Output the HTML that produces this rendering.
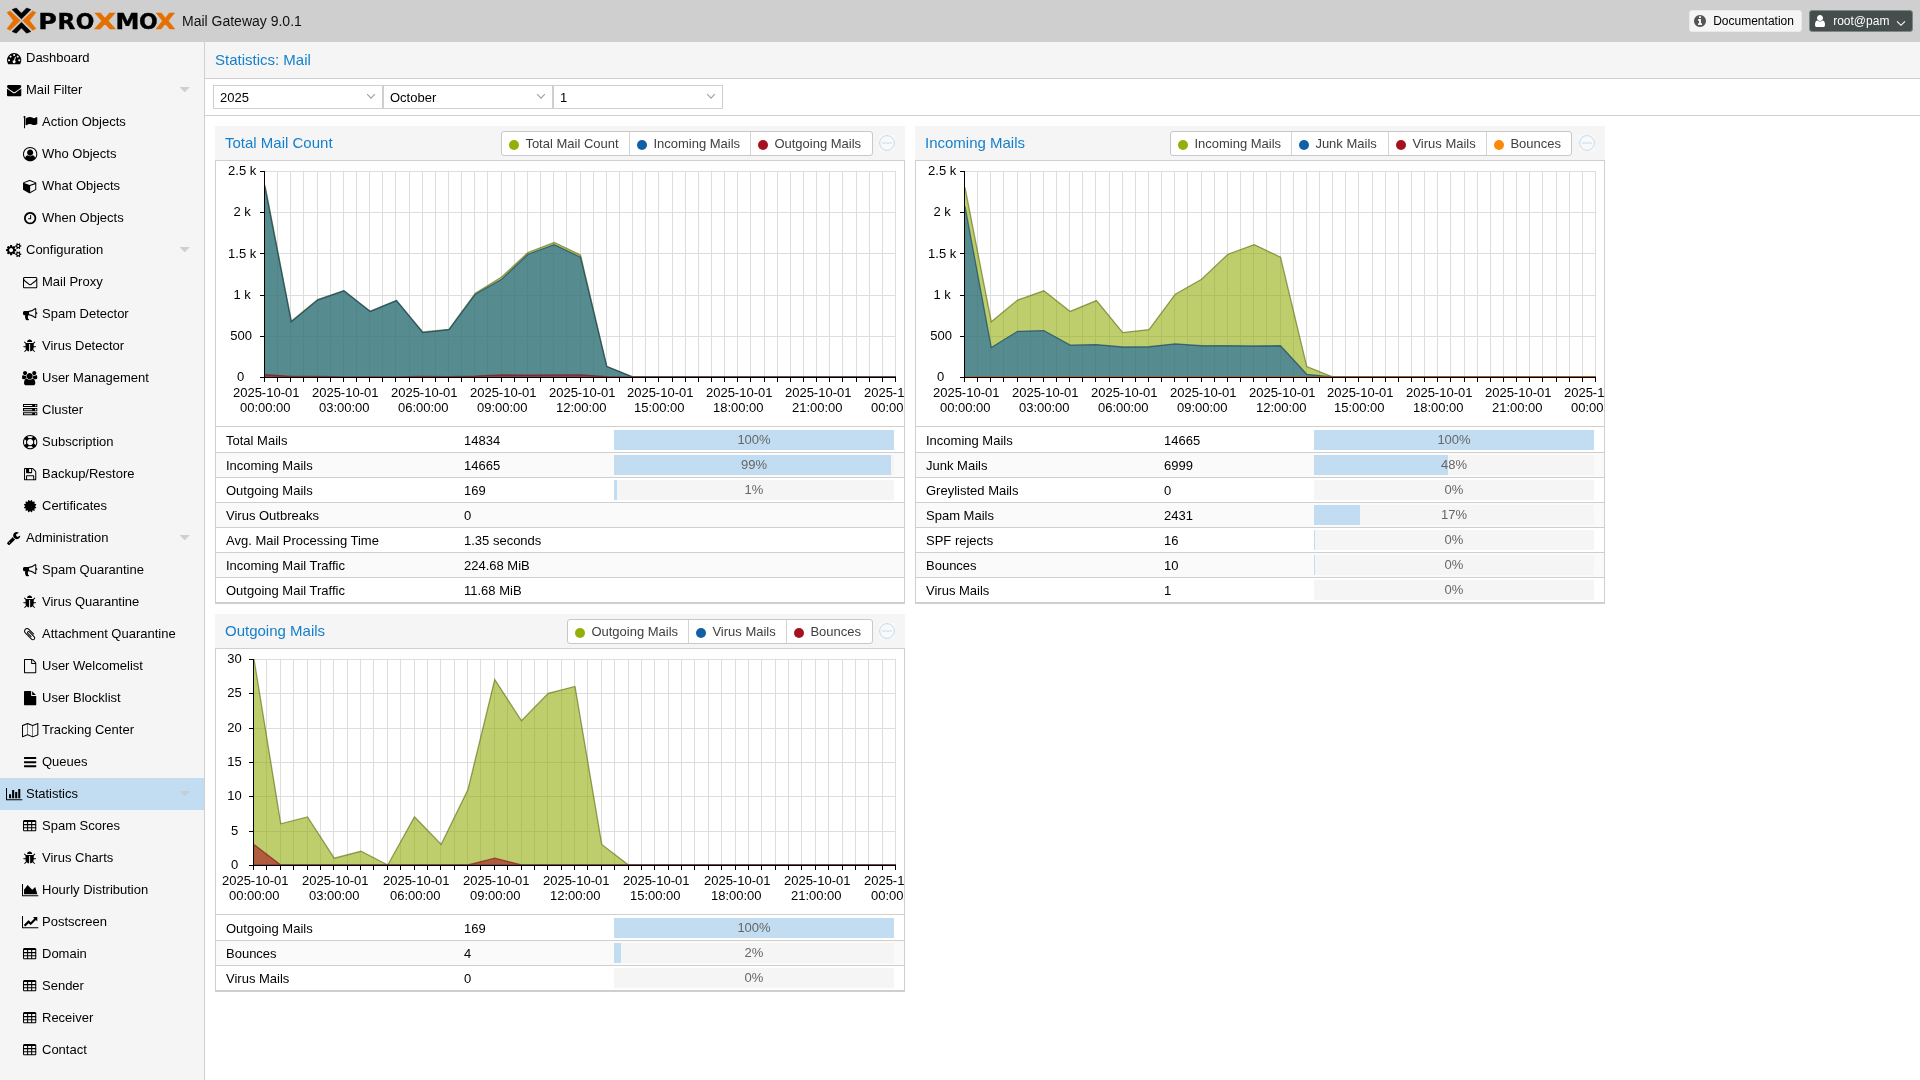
<!DOCTYPE html>
<html lang="en"><head><meta charset="utf-8"><title>Proxmox Mail Gateway - Statistics: Mail</title>
<style>
*{box-sizing:border-box}
html,body{margin:0;padding:0}
body{width:1920px;height:1080px;overflow:hidden;position:relative;background:#fff;font-family:"Liberation Sans",sans-serif;font-size:13px;color:#000}
.abs{position:absolute}
.ic{position:absolute;display:block;overflow:visible}
#hdr,#nav,#main{will-change:transform}
#hdr{position:absolute;left:0;top:0;width:1920px;height:42px;background:#cfcfcf}
#ver{position:absolute;left:182px;top:0;height:42px;line-height:42px;font-size:14px;color:#111;white-space:nowrap}
.hbtn{position:absolute;top:10px;height:22px;border-radius:3px;font-size:12px;line-height:20px;white-space:nowrap}
#nav{position:absolute;left:0;top:42px;width:204px;height:1038px;background:#f5f5f5}
#navb{position:absolute;left:204px;top:42px;width:1px;height:1038px;background:#cfcfcf}
.ni{position:absolute;left:0;width:204px;height:32px;line-height:32px;font-size:13px;color:#000;white-space:nowrap}
.ni.sel{background:#c2ddf2}
.ni span{position:absolute;top:0}
#main{position:absolute;left:205px;top:42px;width:1715px;height:1038px;background:#fff}
#title{position:absolute;left:0;top:0;width:1715px;height:37px;background:#f5f5f5;border-bottom:1px solid #cfcfcf;color:#157fcc;font-size:15px;line-height:36px;padding-left:10px}
#tb{position:absolute;left:0;top:37px;width:1715px;height:37px;background:#fff;border-bottom:1px solid #cfcfcf}
.cb{position:absolute;top:6px;width:170px;height:24px;border:1px solid #cfcfcf;background:#fff;font-size:13px;line-height:24px;padding-left:6px;white-space:nowrap}
.pn{position:absolute;width:690px}
.ph{position:absolute;left:0;top:0;width:690px;height:34px;background:#f5f5f5;color:#157fcc;font-size:15px;line-height:34px;padding-left:10px;white-space:nowrap}
.pb{position:absolute;left:0;top:34px;width:690px;border:1px solid #cfcfcf;background:#fff}
.lg{position:absolute;top:5px;height:25px;border:1px solid #c8c8c8;border-radius:3px;background:#fff;display:flex;font-size:13px;color:#404040;line-height:24px;white-space:nowrap}
.li{position:relative;padding:0 0 0 23.4px;border-right:1px solid #d4d4d4}
.li:last-child{border-right:0}
.li i{position:absolute;left:7px;top:7.8px;width:10.4px;height:10.4px;border-radius:50%}
.tool{position:absolute;left:664px;top:9px;width:16px;height:16px;background:#f9f9f9}
.tool svg{display:block}
.gr{position:absolute;left:0;width:688px;border-top:1px solid #cfcfcf}
.row{position:relative;width:688px;height:25px;border-top:1px solid #cfcfcf;background:#fff;font-size:13px;line-height:15px;white-space:nowrap}
.row:first-child{border-top-color:#fff}
.row:last-child{height:26px;border-bottom:1px solid #cfcfcf}
.row.alt{background:#fafafa}
.row .c1{position:absolute;left:10px;top:5px}
.row .c2{position:absolute;left:248px;top:5px}
.pg{position:absolute;left:398px;top:2px;width:280px;height:20px;background:#f5f5f5;overflow:hidden}
.pg b{position:absolute;left:0;top:0;height:20px;background:#c2ddf2;display:block}
.pg span{position:absolute;left:0;top:0;width:280px;text-align:center;line-height:20px;color:#666;font-size:13px;font-weight:normal}
svg text{font-family:"Liberation Sans",sans-serif;font-size:13px;fill:#000}
</style></head><body>

<div id="hdr">
<svg class="abs" style="left:0;top:0" width="180" height="42" viewBox="0 0 180 42">
<g stroke-width="0.5" stroke-linejoin="round">
<polygon fill="#000" stroke="#000" points="12.0,9.6 16.3,8.0 21.45,13.2 26.6,8.0 30.9,9.6 21.45,19.0"/>
<polygon fill="#000" stroke="#000" points="12.0,31.6 16.3,33.2 21.45,28.0 26.6,33.2 30.9,31.6 21.45,22.2"/>
<polygon fill="#e57000" stroke="#e57000" points="7.0,12.5 10.2,10.9 20.3,20.6 10.2,30.3 7.0,28.7 13.4,20.6"/>
<polygon fill="#e57000" stroke="#e57000" points="35.9,12.5 32.7,10.9 22.6,20.6 32.7,30.3 35.9,28.7 29.5,20.6"/>
</g>
<text y="28.6" style="font-family:'DejaVu Sans','Liberation Sans',sans-serif;font-weight:bold;font-size:20.9px;stroke-width:0.4"><tspan x="38.3" textLength="18.6" lengthAdjust="spacingAndGlyphs" fill="#000" stroke="#000">P</tspan><tspan x="57.5" textLength="17.8" lengthAdjust="spacingAndGlyphs" fill="#000" stroke="#000">R</tspan><tspan x="75.8" textLength="18.6" lengthAdjust="spacingAndGlyphs" fill="#000" stroke="#000">O</tspan><tspan x="94.1" textLength="22.0" lengthAdjust="spacingAndGlyphs" fill="#e57000" stroke="#e57000">X</tspan><tspan x="115.5" textLength="23.9" lengthAdjust="spacingAndGlyphs" fill="#000" stroke="#000">M</tspan><tspan x="139.1" textLength="18.7" lengthAdjust="spacingAndGlyphs" fill="#000" stroke="#000">O</tspan><tspan x="155.5" textLength="19.8" lengthAdjust="spacingAndGlyphs" fill="#e57000" stroke="#e57000">X</tspan></text>
</svg>
<div id="ver">Mail Gateway 9.0.1</div>
<div class="hbtn" style="left:1689px;width:113px;background:#f5f5f5;border:1px solid #eaeaea;color:#000">
<svg class="ic" style="left:4.20px;top:3.00px;width:12.00px;height:14.00px" viewBox="0 -1536 1536 1792"><path fill="#555" transform="scale(1,-1)" d="M1024 160v160q0 14 -9 23t-23 9h-96v512q0 14 -9 23t-23 9h-320q-14 0 -23 -9t-9 -23v-160q0 -14 9 -23t23 -9h96v-320h-96q-14 0 -23 -9t-9 -23v-160q0 -14 9 -23t23 -9h448q14 0 23 9t9 23zM896 1056v160q0 14 -9 23t-23 9h-192q-14 0 -23 -9t-9 -23v-160q0 -14 9 -23
t23 -9h192q14 0 23 9t9 23zM1536 640q0 -209 -103 -385.5t-279.5 -279.5t-385.5 -103t-385.5 103t-279.5 279.5t-103 385.5t103 385.5t279.5 279.5t385.5 103t385.5 -103t279.5 -279.5t103 -385.5z"/></svg>
<span class="abs" style="left:23.2px;top:-0.5px">Documentation</span></div>
<div class="hbtn" style="left:1809px;width:104px;background:#464d4d;border:1px solid #7d8787;color:#fff">
<svg class="ic" style="left:4.60px;top:3.00px;width:10.00px;height:14.00px" viewBox="0 -1536 1280 1792"><path fill="#fff" transform="scale(1,-1)" d="M1280 137q0 -109 -62.5 -187t-150.5 -78h-854q-88 0 -150.5 78t-62.5 187q0 85 8.5 160.5t31.5 152t58.5 131t94 89t134.5 34.5q131 -128 313 -128t313 128q76 0 134.5 -34.5t94 -89t58.5 -131t31.5 -152t8.5 -160.5zM1024 1024q0 -159 -112.5 -271.5t-271.5 -112.5
t-271.5 112.5t-112.5 271.5t112.5 271.5t271.5 112.5t271.5 -112.5t112.5 -271.5z"/></svg>
<span class="abs" style="left:23.2px;top:-0.5px">root@pam</span>
<svg class="abs" style="left:85.2px;top:8.5px" width="12" height="8" viewBox="0 0 12 8"><polyline points="2,1.3 6,5.3 10,1.3" fill="none" stroke="#fff" stroke-width="1.1"/></svg>
</div>
</div>
<div id="nav">
<div class="ni" style="top:0px">
<svg class="ic" style="left:6.85px;top:8.84px;width:14.30px;height:14.30px" viewBox="0 -1536 1792 1792"><path fill="#000" transform="scale(1,-1)" d="M384 384q0 53 -37.5 90.5t-90.5 37.5t-90.5 -37.5t-37.5 -90.5t37.5 -90.5t90.5 -37.5t90.5 37.5t37.5 90.5zM576 832q0 53 -37.5 90.5t-90.5 37.5t-90.5 -37.5t-37.5 -90.5t37.5 -90.5t90.5 -37.5t90.5 37.5t37.5 90.5zM1004 351l101 382q6 26 -7.5 48.5t-38.5 29.5
t-48 -6.5t-30 -39.5l-101 -382q-60 -5 -107 -43.5t-63 -98.5q-20 -77 20 -146t117 -89t146 20t89 117q16 60 -6 117t-72 91zM1664 384q0 53 -37.5 90.5t-90.5 37.5t-90.5 -37.5t-37.5 -90.5t37.5 -90.5t90.5 -37.5t90.5 37.5t37.5 90.5zM1024 1024q0 53 -37.5 90.5
t-90.5 37.5t-90.5 -37.5t-37.5 -90.5t37.5 -90.5t90.5 -37.5t90.5 37.5t37.5 90.5zM1472 832q0 53 -37.5 90.5t-90.5 37.5t-90.5 -37.5t-37.5 -90.5t37.5 -90.5t90.5 -37.5t90.5 37.5t37.5 90.5zM1792 384q0 -261 -141 -483q-19 -29 -54 -29h-1402q-35 0 -54 29
q-141 221 -141 483q0 182 71 348t191 286t286 191t348 71t348 -71t286 -191t191 -286t71 -348z"/></svg>
<span style="left:26px">Dashboard</span>
</div>
<div class="ni" style="top:32px">
<svg class="ic" style="left:6.85px;top:8.84px;width:14.30px;height:14.30px" viewBox="0 -1536 1792 1792"><path fill="#000" transform="scale(1,-1)" d="M1792 826v-794q0 -66 -47 -113t-113 -47h-1472q-66 0 -113 47t-47 113v794q44 -49 101 -87q362 -246 497 -345q57 -42 92.5 -65.5t94.5 -48t110 -24.5h1h1q51 0 110 24.5t94.5 48t92.5 65.5q170 123 498 345q57 39 100 87zM1792 1120q0 -79 -49 -151t-122 -123
q-376 -261 -468 -325q-10 -7 -42.5 -30.5t-54 -38t-52 -32.5t-57.5 -27t-50 -9h-1h-1q-23 0 -50 9t-57.5 27t-52 32.5t-54 38t-42.5 30.5q-91 64 -262 182.5t-205 142.5q-62 42 -117 115.5t-55 136.5q0 78 41.5 130t118.5 52h1472q65 0 112.5 -47t47.5 -113z"/></svg>
<span style="left:26px">Mail Filter</span>
<svg class="abs" style="left:178px;top:10px" width="14" height="12" viewBox="0 0 14 12"><path d="M2.2,3 L11.2,3 Q11.9,3 11.4,3.6 L7.1,7.9 Q6.7,8.3 6.3,7.9 L2,3.6 Q1.5,3 2.2,3Z" fill="#cfcfcf"/></svg>
</div>
<div class="ni" style="top:64px">
<svg class="ic" style="left:22.85px;top:8.84px;width:14.30px;height:14.30px" viewBox="0 -1536 1792 1792"><path fill="#000" transform="scale(1,-1)" d="M320 1280q0 -72 -64 -110v-1266q0 -13 -9.5 -22.5t-22.5 -9.5h-64q-13 0 -22.5 9.5t-9.5 22.5v1266q-64 38 -64 110q0 53 37.5 90.5t90.5 37.5t90.5 -37.5t37.5 -90.5zM1792 1216v-763q0 -25 -12.5 -38.5t-39.5 -27.5q-215 -116 -369 -116q-61 0 -123.5 22t-108.5 48
t-115.5 48t-142.5 22q-192 0 -464 -146q-17 -9 -33 -9q-26 0 -45 19t-19 45v742q0 32 31 55q21 14 79 43q236 120 421 120q107 0 200 -29t219 -88q38 -19 88 -19q54 0 117.5 21t110 47t88 47t54.5 21q26 0 45 -19t19 -45z"/></svg>
<span style="left:42px">Action Objects</span>
</div>
<div class="ni" style="top:96px">
<svg class="ic" style="left:22.85px;top:8.84px;width:14.30px;height:14.30px" viewBox="0 -1536 1792 1792"><path fill="#000" transform="scale(1,-1)" d="M896 1536q182 0 348 -71t286 -191t191 -286t71 -348q0 -181 -70.5 -347t-190.5 -286t-286 -191.5t-349 -71.5t-349 71t-285.5 191.5t-190.5 286t-71 347.5t71 348t191 286t286 191t348 71zM1515 185q149 205 149 455q0 156 -61 298t-164 245t-245 164t-298 61t-298 -61
t-245 -164t-164 -245t-61 -298q0 -250 149 -455q66 327 306 327q131 -128 313 -128t313 128q240 0 306 -327zM1280 832q0 159 -112.5 271.5t-271.5 112.5t-271.5 -112.5t-112.5 -271.5t112.5 -271.5t271.5 -112.5t271.5 112.5t112.5 271.5z"/></svg>
<span style="left:42px">Who Objects</span>
</div>
<div class="ni" style="top:128px">
<svg class="ic" style="left:22.85px;top:8.84px;width:14.30px;height:14.30px" viewBox="0 -1536 1792 1792"><path fill="#000" transform="scale(1,-1)" d="M896 -93l640 349v636l-640 -233v-752zM832 772l698 254l-698 254l-698 -254zM1664 1024v-768q0 -35 -18 -65t-49 -47l-704 -384q-28 -16 -61 -16t-61 16l-704 384q-31 17 -49 47t-18 65v768q0 40 23 73t61 47l704 256q22 8 44 8t44 -8l704 -256q38 -14 61 -47t23 -73z
"/></svg>
<span style="left:42px">What Objects</span>
</div>
<div class="ni" style="top:160px">
<svg class="ic" style="left:23.87px;top:8.84px;width:12.26px;height:14.30px" viewBox="0 -1536 1536 1792"><path fill="#000" transform="scale(1,-1)" d="M896 992v-448q0 -14 -9 -23t-23 -9h-320q-14 0 -23 9t-9 23v64q0 14 9 23t23 9h224v352q0 14 9 23t23 9h64q14 0 23 -9t9 -23zM1312 640q0 148 -73 273t-198 198t-273 73t-273 -73t-198 -198t-73 -273t73 -273t198 -198t273 -73t273 73t198 198t73 273zM1536 640
q0 -209 -103 -385.5t-279.5 -279.5t-385.5 -103t-385.5 103t-279.5 279.5t-103 385.5t103 385.5t279.5 279.5t385.5 103t385.5 -103t279.5 -279.5t103 -385.5z"/></svg>
<span style="left:42px">When Objects</span>
</div>
<div class="ni" style="top:192px">
<svg class="ic" style="left:6.34px;top:8.84px;width:15.32px;height:14.30px" viewBox="0 -1536 1920 1792"><path fill="#000" transform="scale(1,-1)" d="M896 640q0 106 -75 181t-181 75t-181 -75t-75 -181t75 -181t181 -75t181 75t75 181zM1664 128q0 52 -38 90t-90 38t-90 -38t-38 -90q0 -53 37.5 -90.5t90.5 -37.5t90.5 37.5t37.5 90.5zM1664 1152q0 52 -38 90t-90 38t-90 -38t-38 -90q0 -53 37.5 -90.5t90.5 -37.5
t90.5 37.5t37.5 90.5zM1280 731v-185q0 -10 -7 -19.5t-16 -10.5l-155 -24q-11 -35 -32 -76q34 -48 90 -115q7 -11 7 -20q0 -12 -7 -19q-23 -30 -82.5 -89.5t-78.5 -59.5q-11 0 -21 7l-115 90q-37 -19 -77 -31q-11 -108 -23 -155q-7 -24 -30 -24h-186q-11 0 -20 7.5t-10 17.5
l-23 153q-34 10 -75 31l-118 -89q-7 -7 -20 -7q-11 0 -21 8q-144 133 -144 160q0 9 7 19q10 14 41 53t47 61q-23 44 -35 82l-152 24q-10 1 -17 9.5t-7 19.5v185q0 10 7 19.5t16 10.5l155 24q11 35 32 76q-34 48 -90 115q-7 11 -7 20q0 12 7 20q22 30 82 89t79 59q11 0 21 -7
l115 -90q34 18 77 32q11 108 23 154q7 24 30 24h186q11 0 20 -7.5t10 -17.5l23 -153q34 -10 75 -31l118 89q8 7 20 7q11 0 21 -8q144 -133 144 -160q0 -8 -7 -19q-12 -16 -42 -54t-45 -60q23 -48 34 -82l152 -23q10 -2 17 -10.5t7 -19.5zM1920 198v-140q0 -16 -149 -31
q-12 -27 -30 -52q51 -113 51 -138q0 -4 -4 -7q-122 -71 -124 -71q-8 0 -46 47t-52 68q-20 -2 -30 -2t-30 2q-14 -21 -52 -68t-46 -47q-2 0 -124 71q-4 3 -4 7q0 25 51 138q-18 25 -30 52q-149 15 -149 31v140q0 16 149 31q13 29 30 52q-51 113 -51 138q0 4 4 7q4 2 35 20
t59 34t30 16q8 0 46 -46.5t52 -67.5q20 2 30 2t30 -2q51 71 92 112l6 2q4 0 124 -70q4 -3 4 -7q0 -25 -51 -138q17 -23 30 -52q149 -15 149 -31zM1920 1222v-140q0 -16 -149 -31q-12 -27 -30 -52q51 -113 51 -138q0 -4 -4 -7q-122 -71 -124 -71q-8 0 -46 47t-52 68
q-20 -2 -30 -2t-30 2q-14 -21 -52 -68t-46 -47q-2 0 -124 71q-4 3 -4 7q0 25 51 138q-18 25 -30 52q-149 15 -149 31v140q0 16 149 31q13 29 30 52q-51 113 -51 138q0 4 4 7q4 2 35 20t59 34t30 16q8 0 46 -46.5t52 -67.5q20 2 30 2t30 -2q51 71 92 112l6 2q4 0 124 -70
q4 -3 4 -7q0 -25 -51 -138q17 -23 30 -52q149 -15 149 -31z"/></svg>
<span style="left:26px">Configuration</span>
<svg class="abs" style="left:178px;top:10px" width="14" height="12" viewBox="0 0 14 12"><path d="M2.2,3 L11.2,3 Q11.9,3 11.4,3.6 L7.1,7.9 Q6.7,8.3 6.3,7.9 L2,3.6 Q1.5,3 2.2,3Z" fill="#cfcfcf"/></svg>
</div>
<div class="ni" style="top:224px">
<svg class="ic" style="left:22.85px;top:8.84px;width:14.30px;height:14.30px" viewBox="0 -1536 1792 1792"><path fill="#000" transform="scale(1,-1)" d="M1664 32v768q-32 -36 -69 -66q-268 -206 -426 -338q-51 -43 -83 -67t-86.5 -48.5t-102.5 -24.5h-1h-1q-48 0 -102.5 24.5t-86.5 48.5t-83 67q-158 132 -426 338q-37 30 -69 66v-768q0 -13 9.5 -22.5t22.5 -9.5h1472q13 0 22.5 9.5t9.5 22.5zM1664 1083v11v13.5t-0.5 13
t-3 12.5t-5.5 9t-9 7.5t-14 2.5h-1472q-13 0 -22.5 -9.5t-9.5 -22.5q0 -168 147 -284q193 -152 401 -317q6 -5 35 -29.5t46 -37.5t44.5 -31.5t50.5 -27.5t43 -9h1h1q20 0 43 9t50.5 27.5t44.5 31.5t46 37.5t35 29.5q208 165 401 317q54 43 100.5 115.5t46.5 131.5z
M1792 1120v-1088q0 -66 -47 -113t-113 -47h-1472q-66 0 -113 47t-47 113v1088q0 66 47 113t113 47h1472q66 0 113 -47t47 -113z"/></svg>
<span style="left:42px">Mail Proxy</span>
</div>
<div class="ni" style="top:256px">
<svg class="ic" style="left:22.85px;top:8.84px;width:14.30px;height:14.30px" viewBox="0 -1536 1792 1792"><path fill="#000" transform="scale(1,-1)" d="M1664 896q53 0 90.5 -37.5t37.5 -90.5t-37.5 -90.5t-90.5 -37.5v-384q0 -52 -38 -90t-90 -38q-417 347 -812 380q-58 -19 -91 -66t-31 -100.5t40 -92.5q-20 -33 -23 -65.5t6 -58t33.5 -55t48 -50t61.5 -50.5q-29 -58 -111.5 -83t-168.5 -11.5t-132 55.5q-7 23 -29.5 87.5
t-32 94.5t-23 89t-15 101t3.5 98.5t22 110.5h-122q-66 0 -113 47t-47 113v192q0 66 47 113t113 47h480q435 0 896 384q52 0 90 -38t38 -90v-384zM1536 292v954q-394 -302 -768 -343v-270q377 -42 768 -341z"/></svg>
<span style="left:42px">Spam Detector</span>
</div>
<div class="ni" style="top:288px">
<svg class="ic" style="left:23.36px;top:8.84px;width:13.28px;height:14.30px" viewBox="0 -1536 1664 1792"><path fill="#000" transform="scale(1,-1)" d="M1632 576q0 -26 -19 -45t-45 -19h-224q0 -171 -67 -290l208 -209q19 -19 19 -45t-19 -45q-18 -19 -45 -19t-45 19l-198 197q-5 -5 -15 -13t-42 -28.5t-65 -36.5t-82 -29t-97 -13v896h-128v-896q-51 0 -101.5 13.5t-87 33t-66 39t-43.5 32.5l-15 14l-183 -207
q-20 -21 -48 -21q-24 0 -43 16q-19 18 -20.5 44.5t15.5 46.5l202 227q-58 114 -58 274h-224q-26 0 -45 19t-19 45t19 45t45 19h224v294l-173 173q-19 19 -19 45t19 45t45 19t45 -19l173 -173h844l173 173q19 19 45 19t45 -19t19 -45t-19 -45l-173 -173v-294h224q26 0 45 -19
t19 -45zM1152 1152h-640q0 133 93.5 226.5t226.5 93.5t226.5 -93.5t93.5 -226.5z"/></svg>
<span style="left:42px">Virus Detector</span>
</div>
<div class="ni" style="top:320px">
<svg class="ic" style="left:22.34px;top:8.84px;width:15.32px;height:14.30px" viewBox="0 -1536 1920 1792"><path fill="#000" transform="scale(1,-1)" d="M593 640q-162 -5 -265 -128h-134q-82 0 -138 40.5t-56 118.5q0 353 124 353q6 0 43.5 -21t97.5 -42.5t119 -21.5q67 0 133 23q-5 -37 -5 -66q0 -139 81 -256zM1664 3q0 -120 -73 -189.5t-194 -69.5h-874q-121 0 -194 69.5t-73 189.5q0 53 3.5 103.5t14 109t26.5 108.5
t43 97.5t62 81t85.5 53.5t111.5 20q10 0 43 -21.5t73 -48t107 -48t135 -21.5t135 21.5t107 48t73 48t43 21.5q61 0 111.5 -20t85.5 -53.5t62 -81t43 -97.5t26.5 -108.5t14 -109t3.5 -103.5zM640 1280q0 -106 -75 -181t-181 -75t-181 75t-75 181t75 181t181 75t181 -75
t75 -181zM1344 896q0 -159 -112.5 -271.5t-271.5 -112.5t-271.5 112.5t-112.5 271.5t112.5 271.5t271.5 112.5t271.5 -112.5t112.5 -271.5zM1920 671q0 -78 -56 -118.5t-138 -40.5h-134q-103 123 -265 128q81 117 81 256q0 29 -5 66q66 -23 133 -23q59 0 119 21.5t97.5 42.5
t43.5 21q124 0 124 -353zM1792 1280q0 -106 -75 -181t-181 -75t-181 75t-75 181t75 181t181 75t181 -75t75 -181z"/></svg>
<span style="left:42px">User Management</span>
</div>
<div class="ni" style="top:352px">
<svg class="ic" style="left:22.85px;top:8.84px;width:14.30px;height:14.30px" viewBox="0 -1536 1792 1792"><path fill="#000" transform="scale(1,-1)" d="M128 128h1024v128h-1024v-128zM128 640h1024v128h-1024v-128zM1696 192q0 40 -28 68t-68 28t-68 -28t-28 -68t28 -68t68 -28t68 28t28 68zM128 1152h1024v128h-1024v-128zM1696 704q0 40 -28 68t-68 28t-68 -28t-28 -68t28 -68t68 -28t68 28t28 68zM1696 1216
q0 40 -28 68t-68 28t-68 -28t-28 -68t28 -68t68 -28t68 28t28 68zM1792 384v-384h-1792v384h1792zM1792 896v-384h-1792v384h1792zM1792 1408v-384h-1792v384h1792z"/></svg>
<span style="left:42px">Cluster</span>
</div>
<div class="ni" style="top:384px">
<svg class="ic" style="left:22.85px;top:8.84px;width:14.30px;height:14.30px" viewBox="0 -1536 1792 1792"><path fill="#000" transform="scale(1,-1)" d="M896 1536q182 0 348 -71t286 -191t191 -286t71 -348t-71 -348t-191 -286t-286 -191t-348 -71t-348 71t-286 191t-191 286t-71 348t71 348t191 286t286 191t348 71zM896 1408q-190 0 -361 -90l194 -194q82 28 167 28t167 -28l194 194q-171 90 -361 90zM218 279l194 194
q-28 82 -28 167t28 167l-194 194q-90 -171 -90 -361t90 -361zM896 -128q190 0 361 90l-194 194q-82 -28 -167 -28t-167 28l-194 -194q171 -90 361 -90zM896 256q159 0 271.5 112.5t112.5 271.5t-112.5 271.5t-271.5 112.5t-271.5 -112.5t-112.5 -271.5t112.5 -271.5
t271.5 -112.5zM1380 473l194 -194q90 171 90 361t-90 361l-194 -194q28 -82 28 -167t-28 -167z"/></svg>
<span style="left:42px">Subscription</span>
</div>
<div class="ni" style="top:416px">
<svg class="ic" style="left:23.87px;top:8.84px;width:12.26px;height:14.30px" viewBox="0 -1536 1536 1792"><path fill="#000" transform="scale(1,-1)" d="M384 0h768v384h-768v-384zM1280 0h128v896q0 14 -10 38.5t-20 34.5l-281 281q-10 10 -34 20t-39 10v-416q0 -40 -28 -68t-68 -28h-576q-40 0 -68 28t-28 68v416h-128v-1280h128v416q0 40 28 68t68 28h832q40 0 68 -28t28 -68v-416zM896 928v320q0 13 -9.5 22.5t-22.5 9.5
h-192q-13 0 -22.5 -9.5t-9.5 -22.5v-320q0 -13 9.5 -22.5t22.5 -9.5h192q13 0 22.5 9.5t9.5 22.5zM1536 896v-928q0 -40 -28 -68t-68 -28h-1344q-40 0 -68 28t-28 68v1344q0 40 28 68t68 28h928q40 0 88 -20t76 -48l280 -280q28 -28 48 -76t20 -88z"/></svg>
<span style="left:42px">Backup/Restore</span>
</div>
<div class="ni" style="top:448px">
<svg class="ic" style="left:23.87px;top:8.84px;width:12.26px;height:14.30px" viewBox="0 -1536 1536 1792"><path fill="#000" transform="scale(1,-1)" d="M1376 640l138 -135q30 -28 20 -70q-12 -41 -52 -51l-188 -48l53 -186q12 -41 -19 -70q-29 -31 -70 -19l-186 53l-48 -188q-10 -40 -51 -52q-12 -2 -19 -2q-31 0 -51 22l-135 138l-135 -138q-28 -30 -70 -20q-41 11 -51 52l-48 188l-186 -53q-41 -12 -70 19q-31 29 -19 70
l53 186l-188 48q-40 10 -52 51q-10 42 20 70l138 135l-138 135q-30 28 -20 70q12 41 52 51l188 48l-53 186q-12 41 19 70q29 31 70 19l186 -53l48 188q10 41 51 51q41 12 70 -19l135 -139l135 139q29 30 70 19q41 -10 51 -51l48 -188l186 53q41 12 70 -19q31 -29 19 -70
l-53 -186l188 -48q40 -10 52 -51q10 -42 -20 -70z"/></svg>
<span style="left:42px">Certificates</span>
</div>
<div class="ni" style="top:480px">
<svg class="ic" style="left:7.36px;top:8.84px;width:13.28px;height:14.30px" viewBox="0 -1536 1664 1792"><path fill="#000" transform="scale(1,-1)" d="M384 64q0 26 -19 45t-45 19t-45 -19t-19 -45t19 -45t45 -19t45 19t19 45zM1028 484l-682 -682q-37 -37 -90 -37q-52 0 -91 37l-106 108q-38 36 -38 90q0 53 38 91l681 681q39 -98 114.5 -173.5t173.5 -114.5zM1662 919q0 -39 -23 -106q-47 -134 -164.5 -217.5
t-258.5 -83.5q-185 0 -316.5 131.5t-131.5 316.5t131.5 316.5t316.5 131.5q58 0 121.5 -16.5t107.5 -46.5q16 -11 16 -28t-16 -28l-293 -169v-224l193 -107q5 3 79 48.5t135.5 81t70.5 35.5q15 0 23.5 -10t8.5 -25z"/></svg>
<span style="left:26px">Administration</span>
<svg class="abs" style="left:178px;top:10px" width="14" height="12" viewBox="0 0 14 12"><path d="M2.2,3 L11.2,3 Q11.9,3 11.4,3.6 L7.1,7.9 Q6.7,8.3 6.3,7.9 L2,3.6 Q1.5,3 2.2,3Z" fill="#cfcfcf"/></svg>
</div>
<div class="ni" style="top:512px">
<svg class="ic" style="left:22.85px;top:8.84px;width:14.30px;height:14.30px" viewBox="0 -1536 1792 1792"><path fill="#000" transform="scale(1,-1)" d="M1664 896q53 0 90.5 -37.5t37.5 -90.5t-37.5 -90.5t-90.5 -37.5v-384q0 -52 -38 -90t-90 -38q-417 347 -812 380q-58 -19 -91 -66t-31 -100.5t40 -92.5q-20 -33 -23 -65.5t6 -58t33.5 -55t48 -50t61.5 -50.5q-29 -58 -111.5 -83t-168.5 -11.5t-132 55.5q-7 23 -29.5 87.5
t-32 94.5t-23 89t-15 101t3.5 98.5t22 110.5h-122q-66 0 -113 47t-47 113v192q0 66 47 113t113 47h480q435 0 896 384q52 0 90 -38t38 -90v-384zM1536 292v954q-394 -302 -768 -343v-270q377 -42 768 -341z"/></svg>
<span style="left:42px">Spam Quarantine</span>
</div>
<div class="ni" style="top:544px">
<svg class="ic" style="left:23.36px;top:8.84px;width:13.28px;height:14.30px" viewBox="0 -1536 1664 1792"><path fill="#000" transform="scale(1,-1)" d="M1632 576q0 -26 -19 -45t-45 -19h-224q0 -171 -67 -290l208 -209q19 -19 19 -45t-19 -45q-18 -19 -45 -19t-45 19l-198 197q-5 -5 -15 -13t-42 -28.5t-65 -36.5t-82 -29t-97 -13v896h-128v-896q-51 0 -101.5 13.5t-87 33t-66 39t-43.5 32.5l-15 14l-183 -207
q-20 -21 -48 -21q-24 0 -43 16q-19 18 -20.5 44.5t15.5 46.5l202 227q-58 114 -58 274h-224q-26 0 -45 19t-19 45t19 45t45 19h224v294l-173 173q-19 19 -19 45t19 45t45 19t45 -19l173 -173h844l173 173q19 19 45 19t45 -19t19 -45t-19 -45l-173 -173v-294h224q26 0 45 -19
t19 -45zM1152 1152h-640q0 133 93.5 226.5t226.5 93.5t226.5 -93.5t93.5 -226.5z"/></svg>
<span style="left:42px">Virus Quarantine</span>
</div>
<div class="ni" style="top:576px">
<svg class="ic" style="left:24.38px;top:8.84px;width:11.24px;height:14.30px" viewBox="0 -1536 1408 1792"><path fill="#000" transform="scale(1,-1)" d="M1404 151q0 -117 -79 -196t-196 -79q-135 0 -235 100l-777 776q-113 115 -113 271q0 159 110 270t269 111q158 0 273 -113l605 -606q10 -10 10 -22q0 -16 -30.5 -46.5t-46.5 -30.5q-13 0 -23 10l-606 607q-79 77 -181 77q-106 0 -179 -75t-73 -181q0 -105 76 -181
l776 -777q63 -63 145 -63q64 0 106 42t42 106q0 82 -63 145l-581 581q-26 24 -60 24q-29 0 -48 -19t-19 -48q0 -32 25 -59l410 -410q10 -10 10 -22q0 -16 -31 -47t-47 -31q-12 0 -22 10l-410 410q-63 61 -63 149q0 82 57 139t139 57q88 0 149 -63l581 -581q100 -98 100 -235
z"/></svg>
<span style="left:42px">Attachment Quarantine</span>
</div>
<div class="ni" style="top:608px">
<svg class="ic" style="left:23.87px;top:8.84px;width:12.26px;height:14.30px" viewBox="0 -1536 1536 1792"><path fill="#000" transform="scale(1,-1)" d="M1468 1156q28 -28 48 -76t20 -88v-1152q0 -40 -28 -68t-68 -28h-1344q-40 0 -68 28t-28 68v1600q0 40 28 68t68 28h896q40 0 88 -20t76 -48zM1024 1400v-376h376q-10 29 -22 41l-313 313q-12 12 -41 22zM1408 -128v1024h-416q-40 0 -68 28t-28 68v416h-768v-1536h1280z
"/></svg>
<span style="left:42px">User Welcomelist</span>
</div>
<div class="ni" style="top:640px">
<svg class="ic" style="left:23.87px;top:8.84px;width:12.26px;height:14.30px" viewBox="0 -1536 1536 1792"><path fill="#000" transform="scale(1,-1)" d="M1024 1024v472q22 -14 36 -28l408 -408q14 -14 28 -36h-472zM896 992q0 -40 28 -68t68 -28h544v-1056q0 -40 -28 -68t-68 -28h-1344q-40 0 -68 28t-28 68v1600q0 40 28 68t68 28h800v-544z"/></svg>
<span style="left:42px">User Blocklist</span>
</div>
<div class="ni" style="top:672px">
<svg class="ic" style="left:21.83px;top:8.84px;width:16.34px;height:14.30px" viewBox="0 -1536 2048 1792"><path fill="#000" transform="scale(1,-1)" d="M2020 1525q28 -20 28 -53v-1408q0 -20 -11 -36t-29 -23l-640 -256q-24 -11 -48 0l-616 246l-616 -246q-10 -5 -24 -5q-19 0 -36 11q-28 20 -28 53v1408q0 20 11 36t29 23l640 256q24 11 48 0l616 -246l616 246q32 13 60 -6zM736 1390v-1270l576 -230v1270zM128 1173
v-1270l544 217v1270zM1920 107v1270l-544 -217v-1270z"/></svg>
<span style="left:42px">Tracking Center</span>
</div>
<div class="ni" style="top:704px">
<svg class="ic" style="left:23.87px;top:8.84px;width:12.26px;height:14.30px" viewBox="0 -1536 1536 1792"><path fill="#000" transform="scale(1,-1)" d="M1536 192v-128q0 -26 -19 -45t-45 -19h-1408q-26 0 -45 19t-19 45v128q0 26 19 45t45 19h1408q26 0 45 -19t19 -45zM1536 704v-128q0 -26 -19 -45t-45 -19h-1408q-26 0 -45 19t-19 45v128q0 26 19 45t45 19h1408q26 0 45 -19t19 -45zM1536 1216v-128q0 -26 -19 -45
t-45 -19h-1408q-26 0 -45 19t-19 45v128q0 26 19 45t45 19h1408q26 0 45 -19t19 -45z"/></svg>
<span style="left:42px">Queues</span>
</div>
<div class="ni sel" style="top:736px">
<svg class="ic" style="left:5.83px;top:8.84px;width:16.34px;height:14.30px" viewBox="0 -1536 2048 1792"><path fill="#000" transform="scale(1,-1)" d="M640 640v-512h-256v512h256zM1024 1152v-1024h-256v1024h256zM2048 0v-128h-2048v1536h128v-1408h1920zM1408 896v-768h-256v768h256zM1792 1280v-1152h-256v1152h256z"/></svg>
<span style="left:26px">Statistics</span>
<svg class="abs" style="left:178px;top:10px" width="14" height="12" viewBox="0 0 14 12"><path d="M2.2,3 L11.2,3 Q11.9,3 11.4,3.6 L7.1,7.9 Q6.7,8.3 6.3,7.9 L2,3.6 Q1.5,3 2.2,3Z" fill="#c6ced4"/></svg>
</div>
<div class="ni" style="top:768px">
<svg class="ic" style="left:23.36px;top:8.84px;width:13.28px;height:14.30px" viewBox="0 -1536 1664 1792"><path fill="#000" transform="scale(1,-1)" d="M512 160v192q0 14 -9 23t-23 9h-320q-14 0 -23 -9t-9 -23v-192q0 -14 9 -23t23 -9h320q14 0 23 9t9 23zM512 544v192q0 14 -9 23t-23 9h-320q-14 0 -23 -9t-9 -23v-192q0 -14 9 -23t23 -9h320q14 0 23 9t9 23zM1024 160v192q0 14 -9 23t-23 9h-320q-14 0 -23 -9t-9 -23
v-192q0 -14 9 -23t23 -9h320q14 0 23 9t9 23zM512 928v192q0 14 -9 23t-23 9h-320q-14 0 -23 -9t-9 -23v-192q0 -14 9 -23t23 -9h320q14 0 23 9t9 23zM1024 544v192q0 14 -9 23t-23 9h-320q-14 0 -23 -9t-9 -23v-192q0 -14 9 -23t23 -9h320q14 0 23 9t9 23zM1536 160v192
q0 14 -9 23t-23 9h-320q-14 0 -23 -9t-9 -23v-192q0 -14 9 -23t23 -9h320q14 0 23 9t9 23zM1024 928v192q0 14 -9 23t-23 9h-320q-14 0 -23 -9t-9 -23v-192q0 -14 9 -23t23 -9h320q14 0 23 9t9 23zM1536 544v192q0 14 -9 23t-23 9h-320q-14 0 -23 -9t-9 -23v-192
q0 -14 9 -23t23 -9h320q14 0 23 9t9 23zM1536 928v192q0 14 -9 23t-23 9h-320q-14 0 -23 -9t-9 -23v-192q0 -14 9 -23t23 -9h320q14 0 23 9t9 23zM1664 1248v-1088q0 -66 -47 -113t-113 -47h-1344q-66 0 -113 47t-47 113v1088q0 66 47 113t113 47h1344q66 0 113 -47t47 -113
z"/></svg>
<span style="left:42px">Spam Scores</span>
</div>
<div class="ni" style="top:800px">
<svg class="ic" style="left:23.36px;top:8.84px;width:13.28px;height:14.30px" viewBox="0 -1536 1664 1792"><path fill="#000" transform="scale(1,-1)" d="M1632 576q0 -26 -19 -45t-45 -19h-224q0 -171 -67 -290l208 -209q19 -19 19 -45t-19 -45q-18 -19 -45 -19t-45 19l-198 197q-5 -5 -15 -13t-42 -28.5t-65 -36.5t-82 -29t-97 -13v896h-128v-896q-51 0 -101.5 13.5t-87 33t-66 39t-43.5 32.5l-15 14l-183 -207
q-20 -21 -48 -21q-24 0 -43 16q-19 18 -20.5 44.5t15.5 46.5l202 227q-58 114 -58 274h-224q-26 0 -45 19t-19 45t19 45t45 19h224v294l-173 173q-19 19 -19 45t19 45t45 19t45 -19l173 -173h844l173 173q19 19 45 19t45 -19t19 -45t-19 -45l-173 -173v-294h224q26 0 45 -19
t19 -45zM1152 1152h-640q0 133 93.5 226.5t226.5 93.5t226.5 -93.5t93.5 -226.5z"/></svg>
<span style="left:42px">Virus Charts</span>
</div>
<div class="ni" style="top:832px">
<svg class="ic" style="left:21.83px;top:8.84px;width:16.34px;height:14.30px" viewBox="0 -1536 2048 1792"><path fill="#000" transform="scale(1,-1)" d="M2048 0v-128h-2048v1536h128v-1408h1920zM1664 1024l256 -896h-1664v576l448 576l576 -576z"/></svg>
<span style="left:42px">Hourly Distribution</span>
</div>
<div class="ni" style="top:864px">
<svg class="ic" style="left:21.83px;top:8.84px;width:16.34px;height:14.30px" viewBox="0 -1536 2048 1792"><path fill="#000" transform="scale(1,-1)" d="M2048 0v-128h-2048v1536h128v-1408h1920zM1920 1248v-435q0 -21 -19.5 -29.5t-35.5 7.5l-121 121l-633 -633q-10 -10 -23 -10t-23 10l-233 233l-416 -416l-192 192l585 585q10 10 23 10t23 -10l233 -233l464 464l-121 121q-16 16 -7.5 35.5t29.5 19.5h435q14 0 23 -9
t9 -23z"/></svg>
<span style="left:42px">Postscreen</span>
</div>
<div class="ni" style="top:896px">
<svg class="ic" style="left:23.36px;top:8.84px;width:13.28px;height:14.30px" viewBox="0 -1536 1664 1792"><path fill="#000" transform="scale(1,-1)" d="M512 160v192q0 14 -9 23t-23 9h-320q-14 0 -23 -9t-9 -23v-192q0 -14 9 -23t23 -9h320q14 0 23 9t9 23zM512 544v192q0 14 -9 23t-23 9h-320q-14 0 -23 -9t-9 -23v-192q0 -14 9 -23t23 -9h320q14 0 23 9t9 23zM1024 160v192q0 14 -9 23t-23 9h-320q-14 0 -23 -9t-9 -23
v-192q0 -14 9 -23t23 -9h320q14 0 23 9t9 23zM512 928v192q0 14 -9 23t-23 9h-320q-14 0 -23 -9t-9 -23v-192q0 -14 9 -23t23 -9h320q14 0 23 9t9 23zM1024 544v192q0 14 -9 23t-23 9h-320q-14 0 -23 -9t-9 -23v-192q0 -14 9 -23t23 -9h320q14 0 23 9t9 23zM1536 160v192
q0 14 -9 23t-23 9h-320q-14 0 -23 -9t-9 -23v-192q0 -14 9 -23t23 -9h320q14 0 23 9t9 23zM1024 928v192q0 14 -9 23t-23 9h-320q-14 0 -23 -9t-9 -23v-192q0 -14 9 -23t23 -9h320q14 0 23 9t9 23zM1536 544v192q0 14 -9 23t-23 9h-320q-14 0 -23 -9t-9 -23v-192
q0 -14 9 -23t23 -9h320q14 0 23 9t9 23zM1536 928v192q0 14 -9 23t-23 9h-320q-14 0 -23 -9t-9 -23v-192q0 -14 9 -23t23 -9h320q14 0 23 9t9 23zM1664 1248v-1088q0 -66 -47 -113t-113 -47h-1344q-66 0 -113 47t-47 113v1088q0 66 47 113t113 47h1344q66 0 113 -47t47 -113
z"/></svg>
<span style="left:42px">Domain</span>
</div>
<div class="ni" style="top:928px">
<svg class="ic" style="left:23.36px;top:8.84px;width:13.28px;height:14.30px" viewBox="0 -1536 1664 1792"><path fill="#000" transform="scale(1,-1)" d="M512 160v192q0 14 -9 23t-23 9h-320q-14 0 -23 -9t-9 -23v-192q0 -14 9 -23t23 -9h320q14 0 23 9t9 23zM512 544v192q0 14 -9 23t-23 9h-320q-14 0 -23 -9t-9 -23v-192q0 -14 9 -23t23 -9h320q14 0 23 9t9 23zM1024 160v192q0 14 -9 23t-23 9h-320q-14 0 -23 -9t-9 -23
v-192q0 -14 9 -23t23 -9h320q14 0 23 9t9 23zM512 928v192q0 14 -9 23t-23 9h-320q-14 0 -23 -9t-9 -23v-192q0 -14 9 -23t23 -9h320q14 0 23 9t9 23zM1024 544v192q0 14 -9 23t-23 9h-320q-14 0 -23 -9t-9 -23v-192q0 -14 9 -23t23 -9h320q14 0 23 9t9 23zM1536 160v192
q0 14 -9 23t-23 9h-320q-14 0 -23 -9t-9 -23v-192q0 -14 9 -23t23 -9h320q14 0 23 9t9 23zM1024 928v192q0 14 -9 23t-23 9h-320q-14 0 -23 -9t-9 -23v-192q0 -14 9 -23t23 -9h320q14 0 23 9t9 23zM1536 544v192q0 14 -9 23t-23 9h-320q-14 0 -23 -9t-9 -23v-192
q0 -14 9 -23t23 -9h320q14 0 23 9t9 23zM1536 928v192q0 14 -9 23t-23 9h-320q-14 0 -23 -9t-9 -23v-192q0 -14 9 -23t23 -9h320q14 0 23 9t9 23zM1664 1248v-1088q0 -66 -47 -113t-113 -47h-1344q-66 0 -113 47t-47 113v1088q0 66 47 113t113 47h1344q66 0 113 -47t47 -113
z"/></svg>
<span style="left:42px">Sender</span>
</div>
<div class="ni" style="top:960px">
<svg class="ic" style="left:23.36px;top:8.84px;width:13.28px;height:14.30px" viewBox="0 -1536 1664 1792"><path fill="#000" transform="scale(1,-1)" d="M512 160v192q0 14 -9 23t-23 9h-320q-14 0 -23 -9t-9 -23v-192q0 -14 9 -23t23 -9h320q14 0 23 9t9 23zM512 544v192q0 14 -9 23t-23 9h-320q-14 0 -23 -9t-9 -23v-192q0 -14 9 -23t23 -9h320q14 0 23 9t9 23zM1024 160v192q0 14 -9 23t-23 9h-320q-14 0 -23 -9t-9 -23
v-192q0 -14 9 -23t23 -9h320q14 0 23 9t9 23zM512 928v192q0 14 -9 23t-23 9h-320q-14 0 -23 -9t-9 -23v-192q0 -14 9 -23t23 -9h320q14 0 23 9t9 23zM1024 544v192q0 14 -9 23t-23 9h-320q-14 0 -23 -9t-9 -23v-192q0 -14 9 -23t23 -9h320q14 0 23 9t9 23zM1536 160v192
q0 14 -9 23t-23 9h-320q-14 0 -23 -9t-9 -23v-192q0 -14 9 -23t23 -9h320q14 0 23 9t9 23zM1024 928v192q0 14 -9 23t-23 9h-320q-14 0 -23 -9t-9 -23v-192q0 -14 9 -23t23 -9h320q14 0 23 9t9 23zM1536 544v192q0 14 -9 23t-23 9h-320q-14 0 -23 -9t-9 -23v-192
q0 -14 9 -23t23 -9h320q14 0 23 9t9 23zM1536 928v192q0 14 -9 23t-23 9h-320q-14 0 -23 -9t-9 -23v-192q0 -14 9 -23t23 -9h320q14 0 23 9t9 23zM1664 1248v-1088q0 -66 -47 -113t-113 -47h-1344q-66 0 -113 47t-47 113v1088q0 66 47 113t113 47h1344q66 0 113 -47t47 -113
z"/></svg>
<span style="left:42px">Receiver</span>
</div>
<div class="ni" style="top:992px">
<svg class="ic" style="left:23.36px;top:8.84px;width:13.28px;height:14.30px" viewBox="0 -1536 1664 1792"><path fill="#000" transform="scale(1,-1)" d="M512 160v192q0 14 -9 23t-23 9h-320q-14 0 -23 -9t-9 -23v-192q0 -14 9 -23t23 -9h320q14 0 23 9t9 23zM512 544v192q0 14 -9 23t-23 9h-320q-14 0 -23 -9t-9 -23v-192q0 -14 9 -23t23 -9h320q14 0 23 9t9 23zM1024 160v192q0 14 -9 23t-23 9h-320q-14 0 -23 -9t-9 -23
v-192q0 -14 9 -23t23 -9h320q14 0 23 9t9 23zM512 928v192q0 14 -9 23t-23 9h-320q-14 0 -23 -9t-9 -23v-192q0 -14 9 -23t23 -9h320q14 0 23 9t9 23zM1024 544v192q0 14 -9 23t-23 9h-320q-14 0 -23 -9t-9 -23v-192q0 -14 9 -23t23 -9h320q14 0 23 9t9 23zM1536 160v192
q0 14 -9 23t-23 9h-320q-14 0 -23 -9t-9 -23v-192q0 -14 9 -23t23 -9h320q14 0 23 9t9 23zM1024 928v192q0 14 -9 23t-23 9h-320q-14 0 -23 -9t-9 -23v-192q0 -14 9 -23t23 -9h320q14 0 23 9t9 23zM1536 544v192q0 14 -9 23t-23 9h-320q-14 0 -23 -9t-9 -23v-192
q0 -14 9 -23t23 -9h320q14 0 23 9t9 23zM1536 928v192q0 14 -9 23t-23 9h-320q-14 0 -23 -9t-9 -23v-192q0 -14 9 -23t23 -9h320q14 0 23 9t9 23zM1664 1248v-1088q0 -66 -47 -113t-113 -47h-1344q-66 0 -113 47t-47 113v1088q0 66 47 113t113 47h1344q66 0 113 -47t47 -113
z"/></svg>
<span style="left:42px">Contact</span>
</div>
</div><div id="navb"></div>
<div id="main">
<div id="title">Statistics: Mail</div>
<div id="tb">
<div class="cb" style="left:8px">2025<svg class="abs" style="left:151px;top:6px" width="12" height="9" viewBox="0 0 12 9"><polyline points="2.2,2.2 6,6.2 9.8,2.2" fill="none" stroke="#a0a0a0" stroke-width="1.15"/></svg></div>
<div class="cb" style="left:178px">October<svg class="abs" style="left:151px;top:6px" width="12" height="9" viewBox="0 0 12 9"><polyline points="2.2,2.2 6,6.2 9.8,2.2" fill="none" stroke="#a0a0a0" stroke-width="1.15"/></svg></div>
<div class="cb" style="left:348px">1<svg class="abs" style="left:151px;top:6px" width="12" height="9" viewBox="0 0 12 9"><polyline points="2.2,2.2 6,6.2 9.8,2.2" fill="none" stroke="#a0a0a0" stroke-width="1.15"/></svg></div>
</div>
<div class="pn" style="left:10px;top:84px;height:478px"><div class="ph">Total Mail Count<div class="lg" style="right:32px"><div class="li" style="width:128px"><i style="background:#94ae0a"></i>Total Mail Count</div><div class="li" style="width:121px"><i style="background:#115fa6"></i>Incoming Mails</div><div class="li" style="width:121px"><i style="background:#a61120"></i>Outgoing Mails</div></div><div class="tool"><svg width="16" height="16" viewBox="0 0 16 16"><circle cx="8" cy="8" r="7.4" fill="none" stroke="#c2dbf0" stroke-width="1"/><path d="M3.2,8H12.8" stroke="#c2dbf0" stroke-width="1"/></svg></div></div><div class="pb" style="height:444px"><svg class="abs" style="left:0;top:0" width="688" height="265" viewBox="0 0 688 265">
<path d="M61.5,10.5V216.5 M74.5,10.5V216.5 M87.5,10.5V216.5 M101.5,10.5V216.5 M114.5,10.5V216.5 M127.5,10.5V216.5 M140.5,10.5V216.5 M153.5,10.5V216.5 M166.5,10.5V216.5 M179.5,10.5V216.5 M193.5,10.5V216.5 M206.5,10.5V216.5 M219.5,10.5V216.5 M232.5,10.5V216.5 M245.5,10.5V216.5 M258.5,10.5V216.5 M271.5,10.5V216.5 M285.5,10.5V216.5 M298.5,10.5V216.5 M311.5,10.5V216.5 M324.5,10.5V216.5 M337.5,10.5V216.5 M350.5,10.5V216.5 M364.5,10.5V216.5 M377.5,10.5V216.5 M390.5,10.5V216.5 M403.5,10.5V216.5 M416.5,10.5V216.5 M429.5,10.5V216.5 M442.5,10.5V216.5 M456.5,10.5V216.5 M469.5,10.5V216.5 M482.5,10.5V216.5 M495.5,10.5V216.5 M508.5,10.5V216.5 M521.5,10.5V216.5 M534.5,10.5V216.5 M548.5,10.5V216.5 M561.5,10.5V216.5 M574.5,10.5V216.5 M587.5,10.5V216.5 M600.5,10.5V216.5 M613.5,10.5V216.5 M626.5,10.5V216.5 M640.5,10.5V216.5 M653.5,10.5V216.5 M666.5,10.5V216.5 M679.5,10.5V216.5 M48.5,10.5H680.0 M48.5,51.5H680.0 M48.5,92.5H680.0 M48.5,134.5H680.0 M48.5,175.5H680.0" stroke="#dddddd" stroke-width="1" fill="none"/>
<path d="M49.00,24.01 L75.29,160.22 L101.58,138.54 L127.88,129.73 L154.17,150.24 L180.46,139.53 L206.75,171.01 L233.04,168.29 L259.33,132.28 L285.62,115.97 L311.92,91.49 L338.21,81.52 L364.50,94.05 L390.79,205.29 L417.08,216.00 L443.38,216.00 L469.67,216.00 L495.96,216.00 L522.25,216.00 L548.54,216.00 L574.83,216.00 L601.12,216.00 L627.42,216.00 L653.71,216.00 L680.00,216.00 L680.00,216.0 L49.00,216.0 Z" fill="#94ae0a" fill-opacity="0.6" stroke="none"/><path d="M49.00,24.01 L75.29,160.22 L101.58,138.54 L127.88,129.73 L154.17,150.24 L180.46,139.53 L206.75,171.01 L233.04,168.29 L259.33,132.28 L285.62,115.97 L311.92,91.49 L338.21,81.52 L364.50,94.05 L390.79,205.29 L417.08,216.00 L443.38,216.00 L469.67,216.00 L495.96,216.00 L522.25,216.00 L548.54,216.00 L574.83,216.00 L601.12,216.00 L627.42,216.00 L653.71,216.00 L680.00,216.00" fill="none" stroke="#576606" stroke-opacity="0.6" stroke-width="1.3" stroke-linejoin="miter"/>
<path d="M49.00,26.48 L75.29,160.71 L101.58,139.12 L127.88,129.81 L154.17,150.41 L180.46,139.53 L206.75,171.59 L233.04,168.54 L259.33,133.19 L285.62,118.19 L311.92,93.22 L338.21,83.58 L364.50,96.19 L390.79,205.54 L417.08,216.00 L443.38,216.00 L469.67,216.00 L495.96,216.00 L522.25,216.00 L548.54,216.00 L574.83,216.00 L601.12,216.00 L627.42,216.00 L653.71,216.00 L680.00,216.00 L680.00,216.0 L49.00,216.0 Z" fill="#115fa6" fill-opacity="0.6" stroke="none"/><path d="M49.00,26.48 L75.29,160.71 L101.58,139.12 L127.88,129.81 L154.17,150.41 L180.46,139.53 L206.75,171.59 L233.04,168.54 L259.33,133.19 L285.62,118.19 L311.92,93.22 L338.21,83.58 L364.50,96.19 L390.79,205.54 L417.08,216.00 L443.38,216.00 L469.67,216.00 L495.96,216.00 L522.25,216.00 L548.54,216.00 L574.83,216.00 L601.12,216.00 L627.42,216.00 L653.71,216.00 L680.00,216.00" fill="none" stroke="#0a3761" stroke-opacity="0.6" stroke-width="1.3" stroke-linejoin="miter"/>
<path d="M49.00,213.53 L75.29,215.51 L101.58,215.42 L127.88,215.92 L154.17,215.84 L180.46,216.00 L206.75,215.42 L233.04,215.75 L259.33,215.09 L285.62,213.78 L311.92,214.27 L338.21,213.94 L364.50,213.86 L390.79,215.75 L417.08,216.00 L443.38,216.00 L469.67,216.00 L495.96,216.00 L522.25,216.00 L548.54,216.00 L574.83,216.00 L601.12,216.00 L627.42,216.00 L653.71,216.00 L680.00,216.00 L680.00,216.0 L49.00,216.0 Z" fill="#a61120" fill-opacity="0.6" stroke="none"/><path d="M49.00,213.53 L75.29,215.51 L101.58,215.42 L127.88,215.92 L154.17,215.84 L180.46,216.00 L206.75,215.42 L233.04,215.75 L259.33,215.09 L285.62,213.78 L311.92,214.27 L338.21,213.94 L364.50,213.86 L390.79,215.75 L417.08,216.00 L443.38,216.00 L469.67,216.00 L495.96,216.00 L522.25,216.00 L548.54,216.00 L574.83,216.00 L601.12,216.00 L627.42,216.00 L653.71,216.00 L680.00,216.00" fill="none" stroke="#7d0d18" stroke-opacity="0.6" stroke-width="1.3" stroke-linejoin="miter"/>
<path d="M48.5,10.0V217.0 M48.0,216.5H680.0 M44.0,10.5H48.5 M44.0,51.5H48.5 M44.0,92.5H48.5 M44.0,134.5H48.5 M44.0,175.5H48.5 M44.0,216.5H48.5 M48.5,216.5V221.0 M61.5,216.5V221.0 M74.5,216.5V221.0 M87.5,216.5V221.0 M101.5,216.5V221.0 M114.5,216.5V221.0 M127.5,216.5V221.0 M140.5,216.5V221.0 M153.5,216.5V221.0 M166.5,216.5V221.0 M179.5,216.5V221.0 M193.5,216.5V221.0 M206.5,216.5V221.0 M219.5,216.5V221.0 M232.5,216.5V221.0 M245.5,216.5V221.0 M258.5,216.5V221.0 M271.5,216.5V221.0 M285.5,216.5V221.0 M298.5,216.5V221.0 M311.5,216.5V221.0 M324.5,216.5V221.0 M337.5,216.5V221.0 M350.5,216.5V221.0 M364.5,216.5V221.0 M377.5,216.5V221.0 M390.5,216.5V221.0 M403.5,216.5V221.0 M416.5,216.5V221.0 M429.5,216.5V221.0 M442.5,216.5V221.0 M456.5,216.5V221.0 M469.5,216.5V221.0 M482.5,216.5V221.0 M495.5,216.5V221.0 M508.5,216.5V221.0 M521.5,216.5V221.0 M534.5,216.5V221.0 M548.5,216.5V221.0 M561.5,216.5V221.0 M574.5,216.5V221.0 M587.5,216.5V221.0 M600.5,216.5V221.0 M613.5,216.5V221.0 M626.5,216.5V221.0 M640.5,216.5V221.0 M653.5,216.5V221.0 M666.5,216.5V221.0 M679.5,216.5V221.0" stroke="#000" stroke-width="1" fill="none"/>
<text x="26.2" y="14.1" text-anchor="middle">2.5 k</text>
<text x="26.2" y="55.3" text-anchor="middle">2 k</text>
<text x="26.2" y="96.5" text-anchor="middle">1.5 k</text>
<text x="26.2" y="137.7" text-anchor="middle">1 k</text>
<text x="25.2" y="178.9" text-anchor="middle">500</text>
<text x="24.7" y="220.1" text-anchor="middle">0</text>
<text x="50.2" y="236.0" text-anchor="middle">2025-10-01</text><text x="49.25" y="250.8" text-anchor="middle">00:00:00</text>
<text x="129.2" y="236.0" text-anchor="middle">2025-10-01</text><text x="128.25" y="250.8" text-anchor="middle">03:00:00</text>
<text x="208.2" y="236.0" text-anchor="middle">2025-10-01</text><text x="207.25" y="250.8" text-anchor="middle">06:00:00</text>
<text x="287.2" y="236.0" text-anchor="middle">2025-10-01</text><text x="286.25" y="250.8" text-anchor="middle">09:00:00</text>
<text x="366.2" y="236.0" text-anchor="middle">2025-10-01</text><text x="365.25" y="250.8" text-anchor="middle">12:00:00</text>
<text x="444.2" y="236.0" text-anchor="middle">2025-10-01</text><text x="443.25" y="250.8" text-anchor="middle">15:00:00</text>
<text x="523.2" y="236.0" text-anchor="middle">2025-10-01</text><text x="522.25" y="250.8" text-anchor="middle">18:00:00</text>
<text x="602.2" y="236.0" text-anchor="middle">2025-10-01</text><text x="601.25" y="250.8" text-anchor="middle">21:00:00</text>
<text x="681.2" y="236.0" text-anchor="middle">2025-10-02</text><text x="680.25" y="250.8" text-anchor="middle">00:00:00</text>
</svg><div class="gr" style="top:265px"><div class="row"><span class="c1">Total Mails</span><span class="c2">14834</span><div class="pg"><b style="width:280.00px"></b><span>100%</span></div></div><div class="row alt"><span class="c1">Incoming Mails</span><span class="c2">14665</span><div class="pg"><b style="width:276.81px"></b><span>99%</span></div></div><div class="row"><span class="c1">Outgoing Mails</span><span class="c2">169</span><div class="pg"><b style="width:3.19px"></b><span>1%</span></div></div><div class="row alt"><span class="c1">Virus Outbreaks</span><span class="c2">0</span></div><div class="row"><span class="c1">Avg. Mail Processing Time</span><span class="c2">1.35 seconds</span></div><div class="row alt"><span class="c1">Incoming Mail Traffic</span><span class="c2">224.68 MiB</span></div><div class="row"><span class="c1">Outgoing Mail Traffic</span><span class="c2">11.68 MiB</span></div></div></div></div>
<div class="pn" style="left:710px;top:84px;height:478px"><div class="ph">Incoming Mails<div class="lg" style="right:33px"><div class="li" style="width:121px"><i style="background:#94ae0a"></i>Incoming Mails</div><div class="li" style="width:97px"><i style="background:#115fa6"></i>Junk Mails</div><div class="li" style="width:98px"><i style="background:#a61120"></i>Virus Mails</div><div class="li" style="width:84px"><i style="background:#ff8809"></i>Bounces</div></div><div class="tool"><svg width="16" height="16" viewBox="0 0 16 16"><circle cx="8" cy="8" r="7.4" fill="none" stroke="#c2dbf0" stroke-width="1"/><path d="M3.2,8H12.8" stroke="#c2dbf0" stroke-width="1"/></svg></div></div><div class="pb" style="height:444px"><svg class="abs" style="left:0;top:0" width="688" height="265" viewBox="0 0 688 265">
<path d="M61.5,10.5V216.5 M74.5,10.5V216.5 M87.5,10.5V216.5 M101.5,10.5V216.5 M114.5,10.5V216.5 M127.5,10.5V216.5 M140.5,10.5V216.5 M153.5,10.5V216.5 M166.5,10.5V216.5 M179.5,10.5V216.5 M193.5,10.5V216.5 M206.5,10.5V216.5 M219.5,10.5V216.5 M232.5,10.5V216.5 M245.5,10.5V216.5 M258.5,10.5V216.5 M271.5,10.5V216.5 M285.5,10.5V216.5 M298.5,10.5V216.5 M311.5,10.5V216.5 M324.5,10.5V216.5 M337.5,10.5V216.5 M350.5,10.5V216.5 M364.5,10.5V216.5 M377.5,10.5V216.5 M390.5,10.5V216.5 M403.5,10.5V216.5 M416.5,10.5V216.5 M429.5,10.5V216.5 M442.5,10.5V216.5 M456.5,10.5V216.5 M469.5,10.5V216.5 M482.5,10.5V216.5 M495.5,10.5V216.5 M508.5,10.5V216.5 M521.5,10.5V216.5 M534.5,10.5V216.5 M548.5,10.5V216.5 M561.5,10.5V216.5 M574.5,10.5V216.5 M587.5,10.5V216.5 M600.5,10.5V216.5 M613.5,10.5V216.5 M626.5,10.5V216.5 M640.5,10.5V216.5 M653.5,10.5V216.5 M666.5,10.5V216.5 M679.5,10.5V216.5 M48.5,10.5H680.0 M48.5,51.5H680.0 M48.5,92.5H680.0 M48.5,134.5H680.0 M48.5,175.5H680.0" stroke="#dddddd" stroke-width="1" fill="none"/>
<path d="M49.00,26.48 L75.29,160.71 L101.58,139.12 L127.88,129.81 L154.17,150.41 L180.46,139.53 L206.75,171.59 L233.04,168.54 L259.33,133.19 L285.62,118.19 L311.92,93.22 L338.21,83.58 L364.50,96.19 L390.79,205.54 L417.08,216.00 L443.38,216.00 L469.67,216.00 L495.96,216.00 L522.25,216.00 L548.54,216.00 L574.83,216.00 L601.12,216.00 L627.42,216.00 L653.71,216.00 L680.00,216.00 L680.00,216.0 L49.00,216.0 Z" fill="#94ae0a" fill-opacity="0.6" stroke="none"/><path d="M49.00,26.48 L75.29,160.71 L101.58,139.12 L127.88,129.81 L154.17,150.41 L180.46,139.53 L206.75,171.59 L233.04,168.54 L259.33,133.19 L285.62,118.19 L311.92,93.22 L338.21,83.58 L364.50,96.19 L390.79,205.54 L417.08,216.00 L443.38,216.00 L469.67,216.00 L495.96,216.00 L522.25,216.00 L548.54,216.00 L574.83,216.00 L601.12,216.00 L627.42,216.00 L653.71,216.00 L680.00,216.00" fill="none" stroke="#576606" stroke-opacity="0.6" stroke-width="1.3" stroke-linejoin="miter"/>
<path d="M49.00,45.27 L75.29,186.50 L101.58,170.27 L127.88,169.53 L154.17,184.03 L180.46,183.53 L206.75,186.01 L233.04,185.76 L259.33,182.79 L285.62,184.77 L311.92,184.77 L338.21,185.02 L364.50,184.77 L390.79,213.28 L417.08,216.00 L443.38,216.00 L469.67,216.00 L495.96,216.00 L522.25,216.00 L548.54,216.00 L574.83,216.00 L601.12,216.00 L627.42,216.00 L653.71,216.00 L680.00,216.00 L680.00,216.0 L49.00,216.0 Z" fill="#115fa6" fill-opacity="0.6" stroke="none"/><path d="M49.00,45.27 L75.29,186.50 L101.58,170.27 L127.88,169.53 L154.17,184.03 L180.46,183.53 L206.75,186.01 L233.04,185.76 L259.33,182.79 L285.62,184.77 L311.92,184.77 L338.21,185.02 L364.50,184.77 L390.79,213.28 L417.08,216.00 L443.38,216.00 L469.67,216.00 L495.96,216.00 L522.25,216.00 L548.54,216.00 L574.83,216.00 L601.12,216.00 L627.42,216.00 L653.71,216.00 L680.00,216.00" fill="none" stroke="#0a3761" stroke-opacity="0.6" stroke-width="1.3" stroke-linejoin="miter"/>
<path d="M49.00,216.00 L75.29,216.00 L101.58,216.00 L127.88,216.00 L154.17,216.00 L180.46,216.00 L206.75,216.00 L233.04,216.00 L259.33,216.00 L285.62,215.92 L311.92,216.00 L338.21,216.00 L364.50,216.00 L390.79,216.00 L417.08,216.00 L443.38,216.00 L469.67,216.00 L495.96,216.00 L522.25,216.00 L548.54,216.00 L574.83,216.00 L601.12,216.00 L627.42,216.00 L653.71,216.00 L680.00,216.00 L680.00,216.0 L49.00,216.0 Z" fill="#a61120" fill-opacity="0.6" stroke="none"/><path d="M49.00,216.00 L75.29,216.00 L101.58,216.00 L127.88,216.00 L154.17,216.00 L180.46,216.00 L206.75,216.00 L233.04,216.00 L259.33,216.00 L285.62,215.92 L311.92,216.00 L338.21,216.00 L364.50,216.00 L390.79,216.00 L417.08,216.00 L443.38,216.00 L469.67,216.00 L495.96,216.00 L522.25,216.00 L548.54,216.00 L574.83,216.00 L601.12,216.00 L627.42,216.00 L653.71,216.00 L680.00,216.00" fill="none" stroke="#7d0d18" stroke-opacity="0.6" stroke-width="1.3" stroke-linejoin="miter"/>
<path d="M49.00,215.92 L75.29,216.00 L101.58,215.92 L127.88,216.00 L154.17,215.92 L180.46,215.92 L206.75,216.00 L233.04,215.92 L259.33,215.92 L285.62,215.92 L311.92,215.92 L338.21,215.92 L364.50,215.92 L390.79,216.00 L417.08,216.00 L443.38,216.00 L469.67,216.00 L495.96,216.00 L522.25,216.00 L548.54,216.00 L574.83,216.00 L601.12,216.00 L627.42,216.00 L653.71,216.00 L680.00,216.00 L680.00,216.0 L49.00,216.0 Z" fill="#ff8809" fill-opacity="0.6" stroke="none"/><path d="M49.00,215.92 L75.29,216.00 L101.58,215.92 L127.88,216.00 L154.17,215.92 L180.46,215.92 L206.75,216.00 L233.04,215.92 L259.33,215.92 L285.62,215.92 L311.92,215.92 L338.21,215.92 L364.50,215.92 L390.79,216.00 L417.08,216.00 L443.38,216.00 L469.67,216.00 L495.96,216.00 L522.25,216.00 L548.54,216.00 L574.83,216.00 L601.12,216.00 L627.42,216.00 L653.71,216.00 L680.00,216.00" fill="none" stroke="#d97407" stroke-opacity="0.6" stroke-width="1.3" stroke-linejoin="miter"/>
<path d="M48.5,10.0V217.0 M48.0,216.5H680.0 M44.0,10.5H48.5 M44.0,51.5H48.5 M44.0,92.5H48.5 M44.0,134.5H48.5 M44.0,175.5H48.5 M44.0,216.5H48.5 M48.5,216.5V221.0 M61.5,216.5V221.0 M74.5,216.5V221.0 M87.5,216.5V221.0 M101.5,216.5V221.0 M114.5,216.5V221.0 M127.5,216.5V221.0 M140.5,216.5V221.0 M153.5,216.5V221.0 M166.5,216.5V221.0 M179.5,216.5V221.0 M193.5,216.5V221.0 M206.5,216.5V221.0 M219.5,216.5V221.0 M232.5,216.5V221.0 M245.5,216.5V221.0 M258.5,216.5V221.0 M271.5,216.5V221.0 M285.5,216.5V221.0 M298.5,216.5V221.0 M311.5,216.5V221.0 M324.5,216.5V221.0 M337.5,216.5V221.0 M350.5,216.5V221.0 M364.5,216.5V221.0 M377.5,216.5V221.0 M390.5,216.5V221.0 M403.5,216.5V221.0 M416.5,216.5V221.0 M429.5,216.5V221.0 M442.5,216.5V221.0 M456.5,216.5V221.0 M469.5,216.5V221.0 M482.5,216.5V221.0 M495.5,216.5V221.0 M508.5,216.5V221.0 M521.5,216.5V221.0 M534.5,216.5V221.0 M548.5,216.5V221.0 M561.5,216.5V221.0 M574.5,216.5V221.0 M587.5,216.5V221.0 M600.5,216.5V221.0 M613.5,216.5V221.0 M626.5,216.5V221.0 M640.5,216.5V221.0 M653.5,216.5V221.0 M666.5,216.5V221.0 M679.5,216.5V221.0" stroke="#000" stroke-width="1" fill="none"/>
<text x="26.2" y="14.1" text-anchor="middle">2.5 k</text>
<text x="26.2" y="55.3" text-anchor="middle">2 k</text>
<text x="26.2" y="96.5" text-anchor="middle">1.5 k</text>
<text x="26.2" y="137.7" text-anchor="middle">1 k</text>
<text x="25.2" y="178.9" text-anchor="middle">500</text>
<text x="24.7" y="220.1" text-anchor="middle">0</text>
<text x="50.2" y="236.0" text-anchor="middle">2025-10-01</text><text x="49.25" y="250.8" text-anchor="middle">00:00:00</text>
<text x="129.2" y="236.0" text-anchor="middle">2025-10-01</text><text x="128.25" y="250.8" text-anchor="middle">03:00:00</text>
<text x="208.2" y="236.0" text-anchor="middle">2025-10-01</text><text x="207.25" y="250.8" text-anchor="middle">06:00:00</text>
<text x="287.2" y="236.0" text-anchor="middle">2025-10-01</text><text x="286.25" y="250.8" text-anchor="middle">09:00:00</text>
<text x="366.2" y="236.0" text-anchor="middle">2025-10-01</text><text x="365.25" y="250.8" text-anchor="middle">12:00:00</text>
<text x="444.2" y="236.0" text-anchor="middle">2025-10-01</text><text x="443.25" y="250.8" text-anchor="middle">15:00:00</text>
<text x="523.2" y="236.0" text-anchor="middle">2025-10-01</text><text x="522.25" y="250.8" text-anchor="middle">18:00:00</text>
<text x="602.2" y="236.0" text-anchor="middle">2025-10-01</text><text x="601.25" y="250.8" text-anchor="middle">21:00:00</text>
<text x="681.2" y="236.0" text-anchor="middle">2025-10-02</text><text x="680.25" y="250.8" text-anchor="middle">00:00:00</text>
</svg><div class="gr" style="top:265px"><div class="row"><span class="c1">Incoming Mails</span><span class="c2">14665</span><div class="pg"><b style="width:280.00px"></b><span>100%</span></div></div><div class="row alt"><span class="c1">Junk Mails</span><span class="c2">6999</span><div class="pg"><b style="width:133.63px"></b><span>48%</span></div></div><div class="row"><span class="c1">Greylisted Mails</span><span class="c2">0</span><div class="pg"><b style="width:0.00px"></b><span>0%</span></div></div><div class="row alt"><span class="c1">Spam Mails</span><span class="c2">2431</span><div class="pg"><b style="width:46.42px"></b><span>17%</span></div></div><div class="row"><span class="c1">SPF rejects</span><span class="c2">16</span><div class="pg"><b style="width:0.31px"></b><span>0%</span></div></div><div class="row alt"><span class="c1">Bounces</span><span class="c2">10</span><div class="pg"><b style="width:0.19px"></b><span>0%</span></div></div><div class="row"><span class="c1">Virus Mails</span><span class="c2">1</span><div class="pg"><b style="width:0.02px"></b><span>0%</span></div></div></div></div></div>
<div class="pn" style="left:10px;top:572px;height:378px"><div class="ph">Outgoing Mails<div class="lg" style="right:32px"><div class="li" style="width:121px"><i style="background:#94ae0a"></i>Outgoing Mails</div><div class="li" style="width:98px"><i style="background:#115fa6"></i>Virus Mails</div><div class="li" style="width:85px"><i style="background:#a61120"></i>Bounces</div></div><div class="tool"><svg width="16" height="16" viewBox="0 0 16 16"><circle cx="8" cy="8" r="7.4" fill="none" stroke="#c2dbf0" stroke-width="1"/><path d="M3.2,8H12.8" stroke="#c2dbf0" stroke-width="1"/></svg></div></div><div class="pb" style="height:344px"><svg class="abs" style="left:0;top:0" width="688" height="265" viewBox="0 0 688 265">
<path d="M50.5,10.5V216.5 M64.5,10.5V216.5 M77.5,10.5V216.5 M91.5,10.5V216.5 M104.5,10.5V216.5 M117.5,10.5V216.5 M131.5,10.5V216.5 M144.5,10.5V216.5 M157.5,10.5V216.5 M171.5,10.5V216.5 M184.5,10.5V216.5 M198.5,10.5V216.5 M211.5,10.5V216.5 M224.5,10.5V216.5 M238.5,10.5V216.5 M251.5,10.5V216.5 M264.5,10.5V216.5 M278.5,10.5V216.5 M291.5,10.5V216.5 M305.5,10.5V216.5 M318.5,10.5V216.5 M331.5,10.5V216.5 M345.5,10.5V216.5 M358.5,10.5V216.5 M371.5,10.5V216.5 M385.5,10.5V216.5 M398.5,10.5V216.5 M412.5,10.5V216.5 M425.5,10.5V216.5 M438.5,10.5V216.5 M452.5,10.5V216.5 M465.5,10.5V216.5 M478.5,10.5V216.5 M492.5,10.5V216.5 M505.5,10.5V216.5 M519.5,10.5V216.5 M532.5,10.5V216.5 M545.5,10.5V216.5 M559.5,10.5V216.5 M572.5,10.5V216.5 M585.5,10.5V216.5 M599.5,10.5V216.5 M612.5,10.5V216.5 M626.5,10.5V216.5 M639.5,10.5V216.5 M652.5,10.5V216.5 M666.5,10.5V216.5 M679.5,10.5V216.5 M37.5,10.5H680.0 M37.5,44.5H680.0 M37.5,79.5H680.0 M37.5,113.5H680.0 M37.5,147.5H680.0 M37.5,182.5H680.0" stroke="#dddddd" stroke-width="1" fill="none"/>
<path d="M38.00,10.00 L64.75,174.80 L91.50,167.93 L118.25,209.13 L145.00,202.27 L171.75,216.00 L198.50,167.93 L225.25,195.40 L252.00,140.47 L278.75,30.60 L305.50,71.80 L332.25,44.33 L359.00,37.47 L385.75,195.40 L412.50,216.00 L439.25,216.00 L466.00,216.00 L492.75,216.00 L519.50,216.00 L546.25,216.00 L573.00,216.00 L599.75,216.00 L626.50,216.00 L653.25,216.00 L680.00,216.00 L680.00,216.0 L38.00,216.0 Z" fill="#94ae0a" fill-opacity="0.6" stroke="none"/><path d="M38.00,10.00 L64.75,174.80 L91.50,167.93 L118.25,209.13 L145.00,202.27 L171.75,216.00 L198.50,167.93 L225.25,195.40 L252.00,140.47 L278.75,30.60 L305.50,71.80 L332.25,44.33 L359.00,37.47 L385.75,195.40 L412.50,216.00 L439.25,216.00 L466.00,216.00 L492.75,216.00 L519.50,216.00 L546.25,216.00 L573.00,216.00 L599.75,216.00 L626.50,216.00 L653.25,216.00 L680.00,216.00" fill="none" stroke="#576606" stroke-opacity="0.6" stroke-width="1.3" stroke-linejoin="miter"/>
<path d="M38.00,216.00 L64.75,216.00 L91.50,216.00 L118.25,216.00 L145.00,216.00 L171.75,216.00 L198.50,216.00 L225.25,216.00 L252.00,216.00 L278.75,216.00 L305.50,216.00 L332.25,216.00 L359.00,216.00 L385.75,216.00 L412.50,216.00 L439.25,216.00 L466.00,216.00 L492.75,216.00 L519.50,216.00 L546.25,216.00 L573.00,216.00 L599.75,216.00 L626.50,216.00 L653.25,216.00 L680.00,216.00 L680.00,216.0 L38.00,216.0 Z" fill="#115fa6" fill-opacity="0.6" stroke="none"/><path d="M38.00,216.00 L64.75,216.00 L91.50,216.00 L118.25,216.00 L145.00,216.00 L171.75,216.00 L198.50,216.00 L225.25,216.00 L252.00,216.00 L278.75,216.00 L305.50,216.00 L332.25,216.00 L359.00,216.00 L385.75,216.00 L412.50,216.00 L439.25,216.00 L466.00,216.00 L492.75,216.00 L519.50,216.00 L546.25,216.00 L573.00,216.00 L599.75,216.00 L626.50,216.00 L653.25,216.00 L680.00,216.00" fill="none" stroke="#0a3761" stroke-opacity="0.6" stroke-width="1.3" stroke-linejoin="miter"/>
<path d="M38.00,195.40 L64.75,216.00 L91.50,216.00 L118.25,216.00 L145.00,216.00 L171.75,216.00 L198.50,216.00 L225.25,216.00 L252.00,216.00 L278.75,209.13 L305.50,216.00 L332.25,216.00 L359.00,216.00 L385.75,216.00 L412.50,216.00 L439.25,216.00 L466.00,216.00 L492.75,216.00 L519.50,216.00 L546.25,216.00 L573.00,216.00 L599.75,216.00 L626.50,216.00 L653.25,216.00 L680.00,216.00 L680.00,216.0 L38.00,216.0 Z" fill="#a61120" fill-opacity="0.6" stroke="none"/><path d="M38.00,195.40 L64.75,216.00 L91.50,216.00 L118.25,216.00 L145.00,216.00 L171.75,216.00 L198.50,216.00 L225.25,216.00 L252.00,216.00 L278.75,209.13 L305.50,216.00 L332.25,216.00 L359.00,216.00 L385.75,216.00 L412.50,216.00 L439.25,216.00 L466.00,216.00 L492.75,216.00 L519.50,216.00 L546.25,216.00 L573.00,216.00 L599.75,216.00 L626.50,216.00 L653.25,216.00 L680.00,216.00" fill="none" stroke="#7d0d18" stroke-opacity="0.6" stroke-width="1.3" stroke-linejoin="miter"/>
<path d="M37.5,10.0V217.0 M37.0,216.5H680.0 M33.0,10.5H37.5 M33.0,44.5H37.5 M33.0,79.5H37.5 M33.0,113.5H37.5 M33.0,147.5H37.5 M33.0,182.5H37.5 M33.0,216.5H37.5 M37.5,216.5V221.0 M50.5,216.5V221.0 M64.5,216.5V221.0 M77.5,216.5V221.0 M91.5,216.5V221.0 M104.5,216.5V221.0 M117.5,216.5V221.0 M131.5,216.5V221.0 M144.5,216.5V221.0 M157.5,216.5V221.0 M171.5,216.5V221.0 M184.5,216.5V221.0 M198.5,216.5V221.0 M211.5,216.5V221.0 M224.5,216.5V221.0 M238.5,216.5V221.0 M251.5,216.5V221.0 M264.5,216.5V221.0 M278.5,216.5V221.0 M291.5,216.5V221.0 M305.5,216.5V221.0 M318.5,216.5V221.0 M331.5,216.5V221.0 M345.5,216.5V221.0 M358.5,216.5V221.0 M371.5,216.5V221.0 M385.5,216.5V221.0 M398.5,216.5V221.0 M412.5,216.5V221.0 M425.5,216.5V221.0 M438.5,216.5V221.0 M452.5,216.5V221.0 M465.5,216.5V221.0 M478.5,216.5V221.0 M492.5,216.5V221.0 M505.5,216.5V221.0 M519.5,216.5V221.0 M532.5,216.5V221.0 M545.5,216.5V221.0 M559.5,216.5V221.0 M572.5,216.5V221.0 M585.5,216.5V221.0 M599.5,216.5V221.0 M612.5,216.5V221.0 M626.5,216.5V221.0 M639.5,216.5V221.0 M652.5,216.5V221.0 M666.5,216.5V221.0 M679.5,216.5V221.0" stroke="#000" stroke-width="1" fill="none"/>
<text x="18.5" y="14.1" text-anchor="middle">30</text>
<text x="18.5" y="48.4" text-anchor="middle">25</text>
<text x="18.5" y="82.8" text-anchor="middle">20</text>
<text x="18.5" y="117.1" text-anchor="middle">15</text>
<text x="18.5" y="151.4" text-anchor="middle">10</text>
<text x="18.5" y="185.8" text-anchor="middle">5</text>
<text x="18.5" y="220.1" text-anchor="middle">0</text>
<text x="39.2" y="236.0" text-anchor="middle">2025-10-01</text><text x="38.25" y="250.8" text-anchor="middle">00:00:00</text>
<text x="119.2" y="236.0" text-anchor="middle">2025-10-01</text><text x="118.25" y="250.8" text-anchor="middle">03:00:00</text>
<text x="200.2" y="236.0" text-anchor="middle">2025-10-01</text><text x="199.25" y="250.8" text-anchor="middle">06:00:00</text>
<text x="280.2" y="236.0" text-anchor="middle">2025-10-01</text><text x="279.25" y="250.8" text-anchor="middle">09:00:00</text>
<text x="360.2" y="236.0" text-anchor="middle">2025-10-01</text><text x="359.25" y="250.8" text-anchor="middle">12:00:00</text>
<text x="440.2" y="236.0" text-anchor="middle">2025-10-01</text><text x="439.25" y="250.8" text-anchor="middle">15:00:00</text>
<text x="521.2" y="236.0" text-anchor="middle">2025-10-01</text><text x="520.25" y="250.8" text-anchor="middle">18:00:00</text>
<text x="601.2" y="236.0" text-anchor="middle">2025-10-01</text><text x="600.25" y="250.8" text-anchor="middle">21:00:00</text>
<text x="681.2" y="236.0" text-anchor="middle">2025-10-02</text><text x="680.25" y="250.8" text-anchor="middle">00:00:00</text>
</svg><div class="gr" style="top:265px"><div class="row"><span class="c1">Outgoing Mails</span><span class="c2">169</span><div class="pg"><b style="width:280.00px"></b><span>100%</span></div></div><div class="row alt"><span class="c1">Bounces</span><span class="c2">4</span><div class="pg"><b style="width:6.63px"></b><span>2%</span></div></div><div class="row"><span class="c1">Virus Mails</span><span class="c2">0</span><div class="pg"><b style="width:0.00px"></b><span>0%</span></div></div></div></div></div>
</div>
</body></html>
